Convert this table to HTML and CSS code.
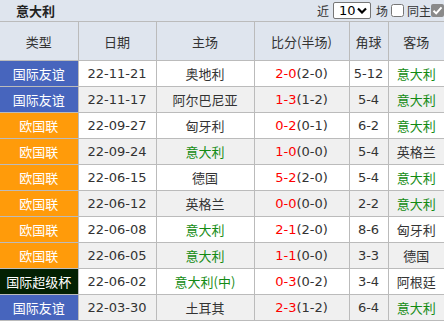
FILE: index.html
```html
<!DOCTYPE html>
<html lang="zh">
<head>
<meta charset="utf-8">
<link rel="stylesheet" href="styles.css">
</head>
<body>
<div class="wrap">
  <div class="titlebar">
    <span class="title">意大利</span>
    <div class="controls">
      <span>近</span>
      <span class="selwrap">
        <select class="sel"><option>10</option></select>
        <svg class="chev" width="10" height="7" viewBox="0 0 10 7"><path d="M1 1.5 L5 5.5 L9 1.5" fill="none" stroke="#000" stroke-width="2.2"/></svg>
      </span>
      <span>场</span>
      <input type="checkbox" class="cb">
      <span>同主</span>
      <span class="cbx" role="checkbox" aria-checked="true"><svg width="13" height="13" viewBox="0 0 13 13"><rect x="0" y="0" width="13" height="13" rx="2" fill="#8a8a8a"/><path d="M2.5 6.8 L5.2 9.4 L10.5 3.3" fill="none" stroke="#fff" stroke-width="2"/></svg></span>
    </div>
  </div>
  <table class="tbl">
    <colgroup>
      <col class="c1"><col class="c2"><col class="c3"><col class="c4"><col class="c5"><col class="c6">
    </colgroup>
    <thead>
      <tr><th>类型</th><th>日期</th><th>主场</th><th>比分(半场)</th><th>角球</th><th>客场</th></tr>
    </thead>
    <tbody>
      <tr><td class="lg blue">国际友谊</td><td>22-11-21</td><td>奥地利</td><td><span class="r">2-0</span>(2-0)</td><td>5-12</td><td class="g">意大利</td></tr>
      <tr class="alt"><td class="lg blue">国际友谊</td><td>22-11-17</td><td>阿尔巴尼亚</td><td><span class="r">1-3</span>(1-2)</td><td>5-4</td><td class="g">意大利</td></tr>
      <tr><td class="lg orange">欧国联</td><td>22-09-27</td><td>匈牙利</td><td><span class="r">0-2</span>(0-1)</td><td>6-2</td><td class="g">意大利</td></tr>
      <tr class="alt"><td class="lg orange">欧国联</td><td>22-09-24</td><td class="g">意大利</td><td><span class="r">1-0</span>(0-0)</td><td>5-4</td><td>英格兰</td></tr>
      <tr><td class="lg orange">欧国联</td><td>22-06-15</td><td>德国</td><td><span class="r">5-2</span>(2-0)</td><td>5-4</td><td class="g">意大利</td></tr>
      <tr class="alt"><td class="lg orange">欧国联</td><td>22-06-12</td><td>英格兰</td><td><span class="r">0-0</span>(0-0)</td><td>2-2</td><td class="g">意大利</td></tr>
      <tr><td class="lg orange">欧国联</td><td>22-06-08</td><td class="g">意大利</td><td><span class="r">2-1</span>(2-0)</td><td>8-6</td><td>匈牙利</td></tr>
      <tr class="alt"><td class="lg orange">欧国联</td><td>22-06-05</td><td class="g">意大利</td><td><span class="r">1-1</span>(0-0)</td><td>3-3</td><td>德国</td></tr>
      <tr><td class="lg dark">国际超级杯</td><td>22-06-02</td><td class="g">意大利(中)</td><td><span class="r">0-3</span>(0-2)</td><td>3-4</td><td>阿根廷</td></tr>
      <tr class="alt"><td class="lg blue">国际友谊</td><td>22-03-30</td><td>土耳其</td><td><span class="r">2-3</span>(1-2)</td><td>6-4</td><td class="g">意大利</td></tr>
    </tbody>
  </table>
</div>
</body>
</html>
```

FILE: styles.css
```css
html, body {
  margin: 0;
  padding: 0;
  background: #fff;
  overflow: hidden;
}
body {
  width: 444px;
  font-family: "Noto Sans CJK SC", "Noto Sans", sans-serif;
  font-size: 13px;
  color: #333;
}
.wrap {
  width: 444px;
}
.titlebar {
  height: 21px;
  background: #dfe5ee;
  border-bottom: 1px solid #bbb;
  display: flex;
  align-items: center;
  justify-content: space-between;
}
.title {
  font-weight: bold;
  margin-left: 16px;
  color: #222;
  line-height: 21px;
}
.controls {
  display: flex;
  align-items: center;
  margin-right: 0;
  line-height: 21px;
  font-size: 12px;
  color: #333;
}
.selwrap {
  position: relative;
  display: inline-flex;
  margin: 0 5px 0 4px;
}
.sel {
  -webkit-appearance: none;
  appearance: none;
  width: 38px;
  height: 17px;
  margin: 0;
  padding: 0 0 0 5px;
  font-family: "DejaVu Sans", sans-serif;
  font-size: 13px;
  line-height: 15px;
  border: 1px solid #767676;
  border-radius: 2px;
  background: #fff;
  color: #000;
}
.chev {
  position: absolute;
  right: 4px;
  top: 5px;
  pointer-events: none;
}
.cb {
  width: 13px;
  height: 13px;
  margin: 0 3px 0 3px;
}
.cbx {
  display: inline-flex;
  width: 13px;
  height: 13px;
}
.tbl {
  width: 444px;
  border-collapse: collapse;
  table-layout: fixed;
}
.c1 { width: 78px; }
.c2 { width: 78px; }
.c3 { width: 98px; }
.c4 { width: 95px; }
.c5 { width: 39px; }
.c6 { width: 56px; }
th, td {
  border: 1px solid #bbb;
  padding: 0;
  text-align: center;
  white-space: nowrap;
  overflow: hidden;
}
th:first-child, td:first-child { border-left: none; }
th:last-child, td:last-child { border-right: none; }
th {
  height: 38px;
  font-weight: normal;
  background: #dfe5ee;
  color: #333;
  border-top: none;
}
td {
  height: 25px;
  font-family: "DejaVu Sans", "Noto Sans CJK SC", sans-serif;
  font-size: 13px;
}
td.lg, td:nth-child(3), td:nth-child(6) {
  font-family: "Noto Sans CJK SC", sans-serif;
}
tr.alt td { background: #f0f0f0; }
td.lg { color: #fff; }
tr td.blue { background: #4765bd; }
tr td.orange { background: #ff9b0a; }
tr td.dark { background: #032002; }
.r { color: #ff0000; }
.g { color: #138b13; }
```
